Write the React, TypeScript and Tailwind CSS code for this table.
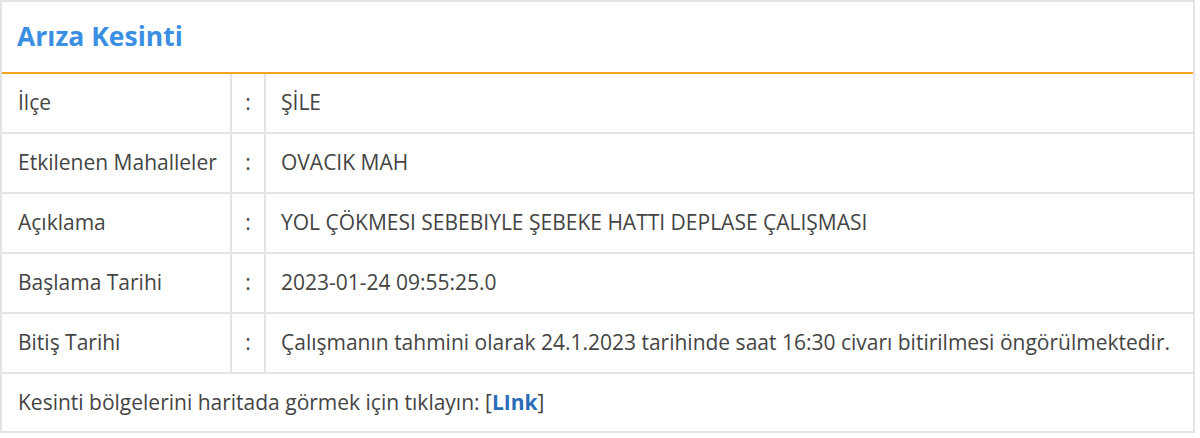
import React from "react";

// Outage detail rows
const rows = [
  { label: "İlçe", value: "ŞİLE" },
  { label: "Etkilenen Mahalleler", value: "OVACIK MAH" },
  { label: "Açıklama", value: "YOL ÇÖKMESI SEBEBIYLE ŞEBEKE HATTI DEPLASE ÇALIŞMASI" },
  { label: "Başlama Tarihi", value: "2023-01-24 09:55:25.0" },
  {
    label: "Bitiş Tarihi",
    value:
      "Çalışmanın tahmini olarak 24.1.2023 tarihinde saat 16:30 civarı bitirilmesi öngörülmektedir.",
  },
];

export default function App() {
  return (
    <div
      className="w-[1195px] h-[433px] bg-white text-[#444] text-[21px]"
      style={{ fontFamily: '"Open Sans", "Liberation Sans", sans-serif' }}
    >
      <div className="h-full border-2 border-[#e4e4e4] flex flex-col">
        {/* Header */}
        <div className="h-[72px] flex items-center px-[15px] border-b-2 border-[#f5a31e]">
          <h2 className="text-[26.5px] font-bold text-[#3b8fe2]">Arıza Kesinti</h2>
        </div>

        {/* Detail table */}
        {rows.map((row) => (
          <div key={row.label} className="h-[60px] flex border-b-2 border-[#e4e4e4]">
            <div className="w-[230px] flex items-center pl-[16px] border-r-2 border-[#e4e4e4]">
              {row.label}
            </div>
            <div className="w-[34px] flex items-center justify-center border-r-2 border-[#e4e4e4]">
              :
            </div>
            <div className="flex-1 flex items-center pl-[15px]">{row.value}</div>
          </div>
        ))}

        {/* Map link */}
        <div className="flex-1 flex items-center pl-[16px]">
          Kesinti bölgelerini haritada görmek için tıklayın: [
          <a href="#" className="font-bold text-[#2b6cb8]">
            LInk
          </a>
          ]
        </div>
      </div>
    </div>
  );
}
